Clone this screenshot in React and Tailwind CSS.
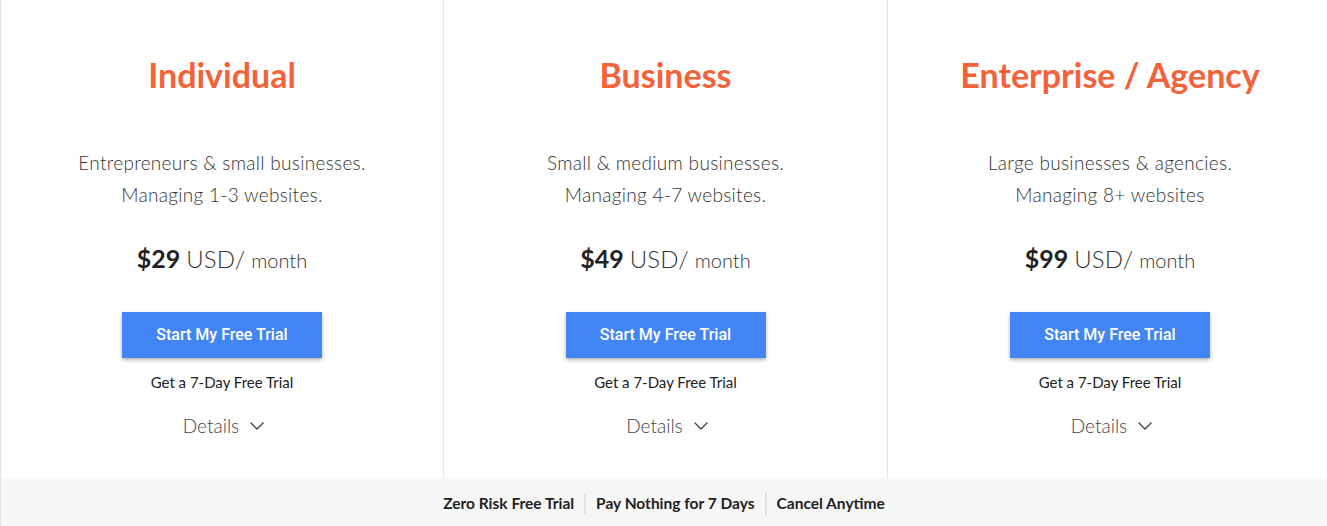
import { ChevronDown } from "lucide-react";

const plans = [
  { name: "Individual", lines: ["Entrepreneurs & small businesses.", "Managing 1-3 websites."], price: "$29" },
  { name: "Business", lines: ["Small & medium businesses.", "Managing 4-7 websites."], price: "$49" },
  { name: "Enterprise / Agency", lines: ["Large businesses & agencies.", "Managing 8+ websites"], price: "$99" },
];

function PlanColumn({ plan, last }) {
  return (
    <div
      className={
        "flex flex-col items-center pt-[53px] h-[478px] " +
        (last ? "" : "border-r border-[#e5e5e5]")
      }
    >
      <h2 className="text-[34px] leading-[44px] font-bold text-[#f4623a]">{plan.name}</h2>
      <div className="mt-[50px] text-center text-[19px] leading-[32px] tracking-[0.3px] font-light text-[#333]">
        <p>{plan.lines[0]}</p>
        <p>{plan.lines[1]}</p>
      </div>
      <div className="mt-[29px] flex items-baseline text-[#222]">
        <span className="text-[25px] font-bold">{plan.price}</span>
        <span className="ml-[6px] text-[24px] font-light text-[#333]">USD/</span>
        <span className="ml-[6px] text-[20px] font-light text-[#333]">month</span>
      </div>
      <button className="mt-[34px] w-[200px] h-[46px] bg-[#4285f4] text-white text-[16px] font-medium font-['Roboto',sans-serif] shadow-[0_2px_4px_rgba(0,0,0,0.3)]">
        Start My Free Trial
      </button>
      <p className="mt-[12px] text-[15px] leading-[24px] text-[#222]">Get a 7-Day Free Trial</p>
      <div className="mt-[20px] pl-[8px] flex items-center gap-[6px] text-[19px] leading-[24px] font-light text-[#444]">
        <span>Details</span>
        <ChevronDown size={24} strokeWidth={1.4} />
      </div>
    </div>
  );
}

export default function App() {
  return (
    <div className="w-[1327px] h-[526px] bg-white border-l border-[#e5e5e5] font-['Lato',sans-serif] overflow-hidden">
      <div className="grid grid-cols-[443px_444px_444px]">
        {plans.map((p, i) => (
          <PlanColumn key={p.name} plan={p} last={i === 2} />
        ))}
      </div>
      <div className="h-[48px] pt-[3px] bg-[#f7f7f7] flex items-center justify-center text-[15.5px] font-bold text-[#222]">
        <span className="pr-[10px]">Zero Risk Free Trial</span>
        <span className="h-[22px] border-l-2 border-[#e3e3e3]" />
        <span className="px-[10px]">Pay Nothing for 7 Days</span>
        <span className="h-[22px] border-l-2 border-[#e3e3e3]" />
        <span className="pl-[10px]">Cancel Anytime</span>
      </div>
    </div>
  );
}
